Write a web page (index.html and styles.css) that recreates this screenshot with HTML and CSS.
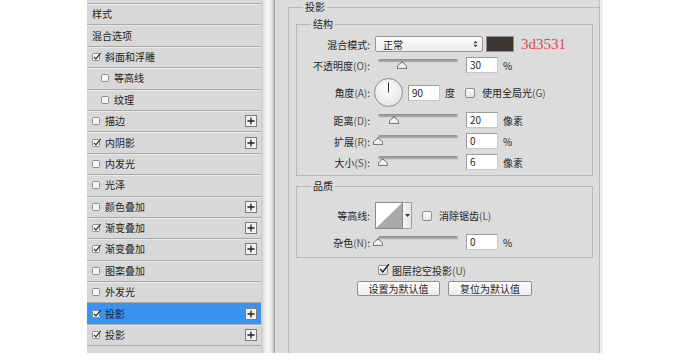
FILE: index.html
```html
<!DOCTYPE html>
<html lang="zh-CN">
<head>
<meta charset="utf-8">
<title>图层样式 - 投影</title>
<link rel="stylesheet" href="styles.css">
</head>
<body>
<div class="app">
  <div class="styles-list">
    <ul class="rows">
      <li class="row"><span class="name">样式</span></li>
      <li class="row"><span class="name">混合选项</span></li>
      <li class="row"><svg class="cb" viewBox="0 0 10 10"><rect x="0.5" y="1.5" width="7" height="7" rx="1"/><path d="M2 4.8 L3.9 6.8 L8.6 1.2"/></svg><span class="name">斜面和浮雕</span></li>
      <li class="row sub"><svg class="cb" viewBox="0 0 10 10"><rect x="0.5" y="1.5" width="7" height="7" rx="1"/></svg><span class="name">等高线</span></li>
      <li class="row sub"><svg class="cb" viewBox="0 0 10 10"><rect x="0.5" y="1.5" width="7" height="7" rx="1"/></svg><span class="name">纹理</span></li>
      <li class="row"><svg class="cb" viewBox="0 0 10 10"><rect x="0.5" y="1.5" width="7" height="7" rx="1"/></svg><span class="name">描边</span><svg class="plus" viewBox="0 0 12 12"><rect x="0.5" y="0.5" width="11" height="11"/><path d="M6 2.5 V9.5 M2.5 6 H9.5"/></svg></li>
      <li class="row"><svg class="cb" viewBox="0 0 10 10"><rect x="0.5" y="1.5" width="7" height="7" rx="1"/><path d="M2 4.8 L3.9 6.8 L8.6 1.2"/></svg><span class="name">内阴影</span><svg class="plus" viewBox="0 0 12 12"><rect x="0.5" y="0.5" width="11" height="11"/><path d="M6 2.5 V9.5 M2.5 6 H9.5"/></svg></li>
      <li class="row"><svg class="cb" viewBox="0 0 10 10"><rect x="0.5" y="1.5" width="7" height="7" rx="1"/></svg><span class="name">内发光</span></li>
      <li class="row"><svg class="cb" viewBox="0 0 10 10"><rect x="0.5" y="1.5" width="7" height="7" rx="1"/></svg><span class="name">光泽</span></li>
      <li class="row"><svg class="cb" viewBox="0 0 10 10"><rect x="0.5" y="1.5" width="7" height="7" rx="1"/></svg><span class="name">颜色叠加</span><svg class="plus" viewBox="0 0 12 12"><rect x="0.5" y="0.5" width="11" height="11"/><path d="M6 2.5 V9.5 M2.5 6 H9.5"/></svg></li>
      <li class="row"><svg class="cb" viewBox="0 0 10 10"><rect x="0.5" y="1.5" width="7" height="7" rx="1"/><path d="M2 4.8 L3.9 6.8 L8.6 1.2"/></svg><span class="name">渐变叠加</span><svg class="plus" viewBox="0 0 12 12"><rect x="0.5" y="0.5" width="11" height="11"/><path d="M6 2.5 V9.5 M2.5 6 H9.5"/></svg></li>
      <li class="row"><svg class="cb" viewBox="0 0 10 10"><rect x="0.5" y="1.5" width="7" height="7" rx="1"/><path d="M2 4.8 L3.9 6.8 L8.6 1.2"/></svg><span class="name">渐变叠加</span><svg class="plus" viewBox="0 0 12 12"><rect x="0.5" y="0.5" width="11" height="11"/><path d="M6 2.5 V9.5 M2.5 6 H9.5"/></svg></li>
      <li class="row"><svg class="cb" viewBox="0 0 10 10"><rect x="0.5" y="1.5" width="7" height="7" rx="1"/></svg><span class="name">图案叠加</span></li>
      <li class="row"><svg class="cb" viewBox="0 0 10 10"><rect x="0.5" y="1.5" width="7" height="7" rx="1"/></svg><span class="name">外发光</span></li>
      <li class="row selected"><svg class="cb" viewBox="0 0 10 10"><rect x="0.5" y="1.5" width="7" height="7" rx="1"/><path d="M2 4.8 L3.9 6.8 L8.6 1.2"/></svg><span class="name">投影</span><svg class="plus" viewBox="0 0 12 12"><rect x="0.5" y="0.5" width="11" height="11"/><path d="M6 2.5 V9.5 M2.5 6 H9.5"/></svg></li>
      <li class="row"><svg class="cb" viewBox="0 0 10 10"><rect x="0.5" y="1.5" width="7" height="7" rx="1"/><path d="M2 4.8 L3.9 6.8 L8.6 1.2"/></svg><span class="name">投影</span><svg class="plus" viewBox="0 0 12 12"><rect x="0.5" y="0.5" width="11" height="11"/><path d="M6 2.5 V9.5 M2.5 6 H9.5"/></svg></li>
    </ul>
  </div>
  <div class="scrollbar"></div>
  <div class="panel">
    <fieldset class="grp outer">
      <legend>投影</legend>
      <fieldset class="grp inner">
        <legend>结构</legend>
        <div class="frow">
          <label class="lbl">混合模式:</label>
          <div class="select"><span>正常</span><svg class="updown" viewBox="0 0 6 9"><path d="M3 0.5 L5.5 3.5 H0.5 Z M3 8.5 L5.5 5.5 H0.5 Z"/></svg></div>
          <span class="swatch"></span>
          <span class="hex">3d3531</span>
        </div>
        <div class="frow">
          <label class="lbl">不透明度<span class="mn">(O)</span>:</label>
          <div class="slider"><div class="track"><span class="thumb" style="left:30%"></span></div></div>
          <span class="num">30</span>
          <span class="unit">%</span>
        </div>
        <div class="frow angle">
          <label class="lbl">角度<span class="mn">(A)</span>:</label>
          <svg class="dial" viewBox="0 0 29 29"><defs><radialGradient id="dg" cx="45%" cy="40%" r="65%"><stop offset="0" stop-color="#ffffff"/><stop offset="1" stop-color="#e2e2e2"/></radialGradient></defs><circle cx="14.5" cy="14.5" r="14" fill="url(#dg)" stroke="#8c8c8c"/><path d="M14.5 14.5 V4.5" stroke="#2a2a2a" stroke-width="1"/></svg>
          <span class="num">90</span>
          <span class="unit">度</span>
          <span class="box gl"></span>
          <span class="opt">使用全局光<span class="mn">(G)</span></span>
        </div>
        <div class="frow">
          <label class="lbl">距离<span class="mn">(D)</span>:</label>
          <div class="slider"><div class="track"><span class="thumb" style="left:20%"></span></div></div>
          <span class="num">20</span>
          <span class="unit">像素</span>
        </div>
        <div class="frow">
          <label class="lbl">扩展<span class="mn">(R)</span>:</label>
          <div class="slider"><div class="track"><span class="thumb" style="left:0%"></span></div></div>
          <span class="num">0</span>
          <span class="unit">%</span>
        </div>
        <div class="frow">
          <label class="lbl">大小<span class="mn">(S)</span>:</label>
          <div class="slider"><div class="track"><span class="thumb" style="left:6%"></span></div></div>
          <span class="num">6</span>
          <span class="unit">像素</span>
        </div>
      </fieldset>
      <fieldset class="grp inner quality">
        <legend>品质</legend>
        <div class="frow contour-row">
          <label class="lbl">等高线:</label>
          <div class="contour">
            <svg class="curve" viewBox="0 0 28 27"><rect x="0.5" y="0.5" width="27" height="26" fill="#ffffff" stroke="#8a8a8a"/><path d="M1 26 L27 1 V26 Z" fill="#a9a9a9"/></svg>
            <span class="drop"><svg viewBox="0 0 5 3"><path d="M0 0 H5 L2.5 3 Z"/></svg></span>
          </div>
          <span class="box aa"></span>
          <span class="opt">消除锯齿<span class="mn">(L)</span></span>
        </div>
        <div class="frow">
          <label class="lbl">杂色<span class="mn">(N)</span>:</label>
          <div class="slider"><div class="track"><span class="thumb" style="left:0%"></span></div></div>
          <span class="num">0</span>
          <span class="unit">%</span>
        </div>
      </fieldset>
      <div class="knock">
        <span class="box checked"><svg viewBox="0 0 12 12"><path d="M2.2 6 L4.8 9 L10.8 1.2"/></svg></span>
        <span>图层挖空投影<span class="mn">(U)</span></span>
      </div>
      <div class="buttons">
        <button class="btn">设置为默认值</button>
        <button class="btn">复位为默认值</button>
      </div>
    </fieldset>
  </div>
</div>
</body>
</html>
```

FILE: styles.css
```css
* {
  box-sizing: border-box;
  margin: 0;
  padding: 0;
}

html,
body {
  background: #ffffff;
}

body {
  font-family: "Noto Sans CJK SC", "Noto Sans", sans-serif;
  font-size: 10px;
  color: #1e1e1e;
}

.app {
  display: flex;
  margin-left: 87px;
  width: 516px;
  height: 353px;
  overflow: hidden;
}

/* ---------- left style list ---------- */
.styles-list {
  width: 174px;
  flex: none;
  background: #d8d8d8;
  padding-top: 3px;
}

.rows {
  list-style: none;
  border-top: 1px solid #a9a9a9;
}

.row {
  display: flex;
  align-items: center;
  gap: 5px;
  height: 21.4px;
  padding: 0 4px 0 5px;
  border-bottom: 1px solid #a9a9a9;
  box-shadow: inset 0 1px 0 #e9e9e9;
  line-height: 12px;
}

.row.sub {
  padding-left: 14px;
}

.row .name {
  flex: 1;
  white-space: nowrap;
}

.row.selected {
  background: #3993f1;
  box-shadow: none;
}

.cb {
  width: 10px;
  height: 10px;
  flex: none;
  margin-right: -2px;
}

.cb rect {
  fill: #f4f4f4;
  stroke: #8d8d8d;
  stroke-width: 1;
}

.cb path {
  fill: none;
  stroke: #2a2a2a;
  stroke-width: 1.2;
}

.plus {
  width: 12px;
  height: 12px;
  flex: none;
}

.plus rect {
  fill: #f2f2f2;
  stroke: #7b7b7b;
}

.plus path {
  stroke: #222222;
  stroke-width: 1.3;
}

/* ---------- scrollbar ---------- */
.scrollbar {
  width: 14px;
  flex: none;
  background: linear-gradient(to right, #c9c9c9 0%, #ececec 30%, #f7f7f7 55%, #e4e4e4 80%, #c3c3c3 100%);
  border-right: 1px solid #a3a3a3;
}

/* ---------- right panel ---------- */
.panel {
  flex: 1;
  background: #dcdcdc;
  padding: 1px 0 0 13px;
  box-shadow: inset -3px 0 0 #ededed, inset -4px 0 0 #c2c2c2;
}

.grp {
  border: 1px solid #b9b9b9;
  min-width: 0;
}

.grp legend {
  font-size: 10px;
  line-height: 12px;
  padding: 0 2px;
  margin-left: 14px;
}

.outer {
  width: 312px;
  height: 380px;
  border-bottom: none;
}

.inner {
  width: 297px;
  margin: 5px 0 0 7px;
  padding: 6px 0 5px 0;
  display: flex;
  flex-direction: column;
  gap: 5px;
}

.inner.quality {
  margin-top: 4px;
  padding: 10px 0 7px 0;
}

.frow {
  display: flex;
  align-items: center;
  height: 16px;
}

.frow.angle {
  height: 29px;
}

.frow.contour-row {
  height: 27px;
}

.lbl {
  width: 73px;
  flex: none;
  text-align: right;
  margin-right: 5px;
  white-space: nowrap;
}

.mn {
  color: #555049;
}

/* select */
.select {
  width: 108px;
  height: 16px;
  display: flex;
  align-items: center;
  justify-content: space-between;
  padding: 0 4px 0 7px;
  border: 1px solid #989898;
  border-radius: 2px;
  background: linear-gradient(#fdfdfd, #ececec);
}

.updown {
  width: 5px;
  height: 8px;
  fill: #4a4a4a;
}

.swatch {
  width: 28px;
  height: 16px;
  margin-left: 3px;
  background: #3d3531;
  border: 1px solid #8e8e8e;
}

.hex {
  margin-left: 7px;
  font-family: "Liberation Serif", "Times New Roman", serif;
  font-size: 15px;
  line-height: 16px;
  color: #e2424d;
}

/* slider */
.slider {
  width: 87px;
  height: 16px;
  flex: none;
  padding: 2px 4px 0 3px;
}

.track {
  position: relative;
  height: 4px;
  border-radius: 2px;
  background: linear-gradient(#8d8d8d, #bdbdbd);
  box-shadow: inset 0 -1px 0 #d2d2d2;
}

.thumb {
  position: absolute;
  top: 2px;
  width: 10px;
  height: 8px;
  transform: translateX(-50%);
  background: #7c7c7c;
  clip-path: polygon(50% 0, 100% 62%, 100% 100%, 0 100%, 0 62%);
}

.thumb::after {
  content: "";
  position: absolute;
  left: 1px;
  top: 1.5px;
  right: 1px;
  bottom: 1px;
  background: linear-gradient(#ffffff, #e6e6e6);
  clip-path: polygon(50% 0, 100% 62%, 100% 100%, 0 100%, 0 62%);
}

.num {
  width: 32px;
  height: 16px;
  flex: none;
  margin-left: 4px;
  padding-left: 3px;
  line-height: 14px;
  background: #ffffff;
  border: 1px solid #9c9c9c;
  border-right-color: #c9c9c9;
  border-bottom-color: #c9c9c9;
}

.unit {
  margin-left: 5px;
}

/* angle dial */
.dial {
  width: 29px;
  height: 29px;
  flex: none;
  margin-left: -1px;
}

.angle .num {
  margin-left: 5px;
}

/* checkboxes */
.box {
  width: 10px;
  height: 10px;
  flex: none;
  border: 1px solid #8e8e8e;
  border-radius: 2px;
  background: linear-gradient(#ffffff, #e3e3e3);
  position: relative;
}

.box.gl {
  margin-left: 10px;
}

.box.aa {
  margin-left: 10px;
}

.opt {
  margin-left: 7px;
  white-space: nowrap;
}

/* contour */
.contour {
  display: flex;
  height: 27px;
}

.curve {
  width: 28px;
  height: 27px;
}

.drop {
  width: 9px;
  height: 27px;
  display: flex;
  align-items: center;
  justify-content: center;
  background: linear-gradient(to right, #f6f6f6, #e4e4e4);
  border: 1px solid #a0a0a0;
  border-left: none;
}

.drop svg {
  width: 5px;
  height: 3px;
  fill: #333333;
}

/* knockout + buttons */
.knock {
  display: flex;
  align-items: center;
  gap: 4px;
  height: 12px;
  margin: 6px 0 0 89px;
}

.box.checked svg {
  position: absolute;
  left: -1px;
  top: -3px;
  width: 12px;
  height: 12px;
}

.box.checked path {
  fill: none;
  stroke: #1f1f1f;
  stroke-width: 1.4;
}

.buttons {
  display: flex;
  gap: 8px;
  margin: 5px 0 0 68px;
}

.btn {
  height: 15px;
  width: 83px;
  font-family: "Noto Sans CJK SC", "Noto Sans", sans-serif;
  font-size: 10px;
  line-height: 13px;
  color: #1e1e1e;
  background: linear-gradient(#fdfdfd, #ececec);
  border: 1px solid #8f8f8f;
  border-radius: 2px;
}

.btn + .btn {
  width: 84px;
}
```
